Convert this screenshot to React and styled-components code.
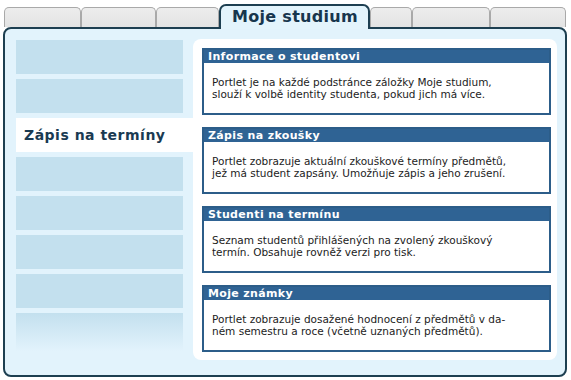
import styled, { createGlobalStyle } from 'styled-components';

const GlobalStyle = createGlobalStyle`
  html, body {
    margin: 0;
    padding: 0;
    background: #fff;
  }
  body {
    font-family: "DejaVu Sans", Verdana, sans-serif;
  }
`;

const Page = styled.div`
  width: 571px;
  height: 380px;
  padding-top: 4px;
  box-sizing: border-box;
`;

const TabBar = styled.div`
  display: flex;
  align-items: flex-end;
  height: 25px;
  margin-left: 4px;
  margin-bottom: -2px;
  position: relative;
  z-index: 2;
`;

const Tab = styled.div`
  box-sizing: border-box;
  width: ${p => p.$w}px;
  height: 20px;
  margin-bottom: 2px;
  border: 1px solid #a9a9a9;
  border-bottom: none;
  border-radius: 5px 5px 0 0;
  background: linear-gradient(#ededed, #e3e3e3);
`;

const ActiveTab = styled.div`
  box-sizing: border-box;
  width: ${p => p.$w}px;
  height: 25px;
  border: 2px solid #1d3f51;
  border-bottom: none;
  border-radius: 7px 7px 0 0;
  background: #e3f4fc;
  padding-left: 11px;
  font-weight: bold;
  font-size: 16px;
  letter-spacing: 0.3px;
  line-height: 22px;
  color: #17364d;
`;

const Panel = styled.div`
  box-sizing: border-box;
  margin-left: 3px;
  width: 564px;
  height: 350px;
  border: 2px solid #1d3f51;
  border-radius: 8px;
  background: #e2f3fc;
  padding: 10px 8px 15px 11px;
  display: grid;
  grid-template-columns: 167px 1fr;
  column-gap: 10px;
`;

const Menu = styled.div`
  display: flex;
  flex-direction: column;
  gap: 5px;
  padding-top: 1px;
`;

const MenuItem = styled.div`
  box-sizing: border-box;
  height: ${p => (p.$last ? 38 : 34)}px;
  background: ${p =>
    p.$last ? 'linear-gradient(#c3e0ee, #e2f3fc)' : '#c3e0ee'};
`;

const ActiveItem = styled.div`
  box-sizing: border-box;
  height: 34px;
  margin-right: -10px;
  background: #fff;
  padding-left: 8px;
  display: flex;
  align-items: center;
  font-weight: bold;
  font-size: 14px;
  letter-spacing: 0.5px;
  color: #1a3a52;
`;

const Content = styled.div`
  background: #fff;
  border-radius: 8px;
  padding: 9px 6px 0 9px;
  display: flex;
  flex-direction: column;
  gap: 12px;
`;

const Portlet = styled.div`
  box-sizing: border-box;
  height: 67px;
  border: 2px solid #2c5d89;
  background: #fff;
`;

const PortletHeader = styled.div`
  height: 13px;
  background: #2f6394;
  color: #fff;
  font-weight: bold;
  font-size: 11px;
  letter-spacing: 0.35px;
  line-height: 13px;
  padding-left: 4px;
  white-space: nowrap;
`;

const PortletBody = styled.div`
  padding: 13px 7px 0 8px;
  font-size: 10.5px;
  line-height: 12px;
  color: #1c1c1c;
  white-space: nowrap;
`;

const portlets = [
  {
    title: 'Informace o studentovi',
    lines: [
      'Portlet je na každé podstránce záložky Moje studium,',
      'slouží k volbě identity studenta, pokud jich má více.',
    ],
  },
  {
    title: 'Zápis na zkoušky',
    lines: [
      'Portlet zobrazuje aktuální zkouškové termíny předmětů,',
      'jež má student zapsány. Umožňuje zápis a jeho zrušení.',
    ],
  },
  {
    title: 'Studenti na termínu',
    lines: [
      'Seznam studentů přihlášených na zvolený zkouškový',
      'termín. Obsahuje rovněž verzi pro tisk.',
    ],
  },
  {
    title: 'Moje známky',
    lines: [
      'Portlet zobrazuje dosažené hodnocení z předmětů v da-',
      'ném semestru a roce (včetně uznaných předmětů).',
    ],
  },
];

export default function App() {
  return (
    <Page>
      <GlobalStyle />
      <TabBar>
        <Tab $w={77} />
        <Tab $w={75} />
        <Tab $w={63} />
        <ActiveTab $w={151}>Moje studium</ActiveTab>
        <Tab $w={42} />
        <Tab $w={78} />
        <Tab $w={76} />
      </TabBar>
      <Panel>
        <Menu>
          <MenuItem />
          <MenuItem />
          <ActiveItem>Zápis na termíny</ActiveItem>
          <MenuItem />
          <MenuItem />
          <MenuItem />
          <MenuItem />
          <MenuItem $last />
        </Menu>
        <Content>
          {portlets.map(p => (
            <Portlet key={p.title}>
              <PortletHeader>{p.title}</PortletHeader>
              <PortletBody>
                {p.lines.map(line => (
                  <div key={line}>{line}</div>
                ))}
              </PortletBody>
            </Portlet>
          ))}
        </Content>
      </Panel>
    </Page>
  );
}
